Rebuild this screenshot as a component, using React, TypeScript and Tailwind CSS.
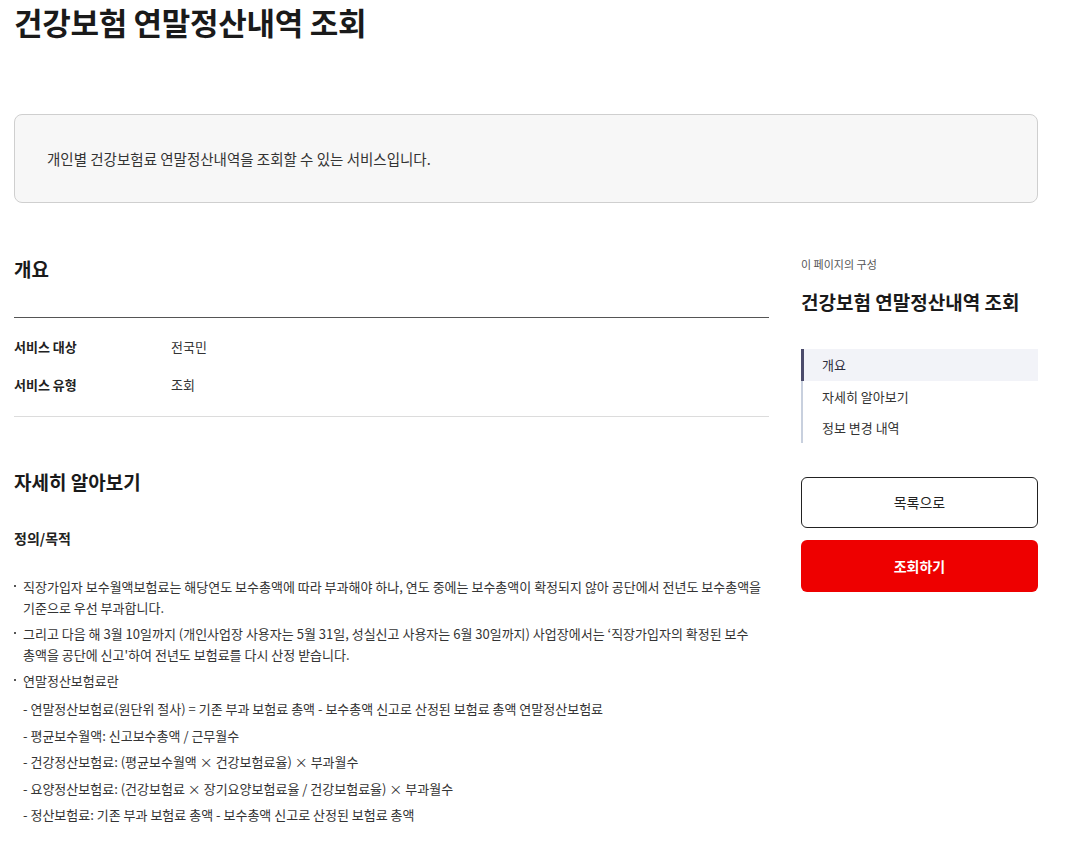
import React from "react";

const font = { fontFamily: '"Noto Sans CJK KR", "Noto Sans", sans-serif' };

export default function App() {
  const bullets = [
    "직장가입자 보수월액보험료는 해당연도 보수총액에 따라 부과해야 하나, 연도 중에는 보수총액이 확정되지 않아 공단에서 전년도 보수총액을 기준으로 우선 부과합니다.",
    "그리고 다음 해 3월 10일까지 (개인사업장 사용자는 5월 31일, 성실신고 사용자는 6월 30일까지) 사업장에서는 ‘직장가입자의 확정된 보수 총액을 공단에 신고'하여 전년도 보험료를 다시 산정 받습니다.",
    "연말정산보험료란",
  ];
  const subs = [
    "- 연말정산보험료(원단위 절사) = 기존 부과 보험료 총액 - 보수총액 신고로 산정된 보험료 총액 연말정산보험료",
    "- 평균보수월액: 신고보수총액 / 근무월수",
    "- 건강정산보험료: (평균보수월액 × 건강보험료율) × 부과월수",
    "- 요양정산보험료: (건강보험료 × 장기요양보험료율 / 건강보험료율) × 부과월수",
    "- 정산보험료: 기존 부과 보험료 총액 - 보수총액 신고로 산정된 보험료 총액",
  ];
  return (
    <div className="w-[1072px] min-h-[844px] bg-white text-[#222]" style={font}>
      <div className="w-[1024px] ml-[14px]">
        <h1 className="text-[31px] font-bold leading-[44px] text-[#1a1a1a] tracking-[-0.3px]">
          건강보험 연말정산내역 조회
        </h1>
        <div className="mt-[70px] h-[89px] rounded-[8px] border border-[#cfcfcf] bg-[#f7f7f7] flex items-center px-[32px] text-[14.5px] text-[#333]">
          개인별 건강보험료 연말정산내역을 조회할 수 있는 서비스입니다.
        </div>
        <div className="flex gap-[32px] mt-[51px]">
          <div className="w-[755px]">
            <h2 className="text-[19px] font-bold leading-[30px] text-[#1a1a1a]">개요</h2>
            <div className="mt-[33px] border-t border-[#555]" />
            <div className="pt-[10px] pb-[12px]">
              <div className="flex h-[38px] items-center text-[13px]">
                <div className="w-[157px] font-bold text-[#222]">서비스 대상</div>
                <div className="text-[#333]">전국민</div>
              </div>
              <div className="flex h-[38px] items-center text-[13px]">
                <div className="w-[157px] font-bold text-[#222]">서비스 유형</div>
                <div className="text-[#333]">조회</div>
              </div>
            </div>
            <div className="border-t border-[#dcdcdc]" />
            <h2 className="mt-[50px] text-[19px] font-bold leading-[30px] text-[#1a1a1a]">자세히 알아보기</h2>
            <h3 className="mt-[31px] text-[14px] font-bold leading-[20px] text-[#222]">정의/목적</h3>
            <ul className="mt-[28px] text-[13px] leading-[21px] text-[#333] break-keep">
              {bullets.map((b, i) => (
                <li key={i} className="relative pl-[9px] mb-[5px]">
                  <span className="absolute left-0 top-[9px] w-[2px] h-[2px] bg-[#555]" />
                  {b}
                </li>
              ))}
            </ul>
            <div className="pl-[9px] text-[13px] leading-[26.5px] text-[#333]">
              {subs.map((s, i) => (
                <div key={i}>{s}</div>
              ))}
            </div>
          </div>
          <div className="w-[237px]">
            <div className="pt-[2px] text-[11px] text-[#555] leading-[16px]">이 페이지의 구성</div>
            <div className="mt-[16px] text-[19px] font-bold leading-[28px] text-[#1a1a1a]">건강보험 연말정산내역 조회</div>
            <div className="mt-[33px] flex flex-col text-[13px] text-[#333]">
              <div className="h-[32px] flex items-center pl-[18px] bg-[#f2f3f8] border-l-[3px] border-[#4b4b6b] text-[#2a2a3a]">개요</div>
              <div className="h-[31px] flex items-center pl-[19px] border-l-[2px] border-[#c8d0de]">자세히 알아보기</div>
              <div className="h-[31px] flex items-center pl-[19px] border-l-[2px] border-[#c8d0de]">정보 변경 내역</div>
            </div>
            <button className="mt-[34px] w-full h-[51px] rounded-[6px] border border-[#222] bg-white text-[14px] text-[#222]">
              목록으로
            </button>
            <button className="mt-[12px] w-full h-[52px] rounded-[6px] bg-[#ee0000] text-[14px] font-bold text-white">
              조회하기
            </button>
          </div>
        </div>
      </div>
    </div>
  );
}
